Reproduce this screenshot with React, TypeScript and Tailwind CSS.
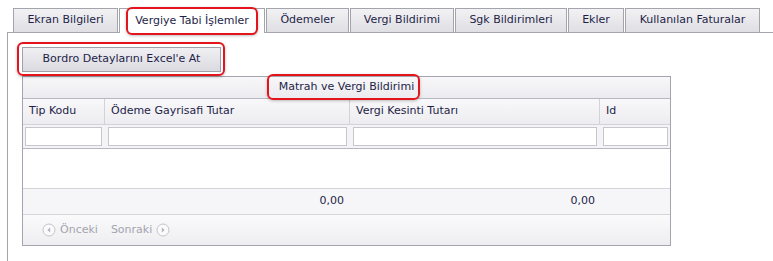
import React from 'react';

const tabs = [
  { label: 'Ekran Bilgileri', w: 'w-[105px]' },
  { label: 'Vergiye Tabi İşlemler', w: 'w-[146px]', active: true },
  { label: 'Ödemeler', w: 'w-[83px]' },
  { label: 'Vergi Bildirimi', w: 'w-[104px]' },
  { label: 'Sgk Bildirimleri', w: 'w-[112px]' },
  { label: 'Ekler', w: 'w-[56px]' },
  { label: 'Kullanılan Faturalar', w: 'w-[135px]' },
];

// red annotation box drawn over an element
function Mark({ className }: { className: string }) {
  return (
    <span
      className={`pointer-events-none absolute rounded-[6px] border-2 border-[#e3141c] shadow-[0_1px_3px_rgba(0,0,0,0.25)] ${className}`}
    />
  );
}

function PagerIcon({ dir }: { dir: 'left' | 'right' }) {
  return (
    <svg width="14" height="14" viewBox="0 0 14 14" className="shrink-0">
      <circle cx="7" cy="7" r="6" fill="#fafafc" stroke="#c4c4cc" strokeWidth="1" />
      {dir === 'left' ? (
        <path d="M8.2 4.6 L5.4 7 L8.2 9.4 Z" fill="#b4b4bc" />
      ) : (
        <path d="M5.8 4.6 L8.6 7 L5.8 9.4 Z" fill="#b4b4bc" />
      )}
    </svg>
  );
}

function FilterInput({ w }: { w: string }) {
  return <div className={`h-[19px] border border-[#c6c6cc] bg-white ${w}`} />;
}

export default function App() {
  return (
    <div className="h-[261px] w-[773px] overflow-hidden bg-white font-['DejaVu_Sans',Verdana,sans-serif] text-[11px] text-[#1e1e48]">
      <div className="ml-[7px] pt-[8px]">
        {/* tab strip */}
        <div className="flex gap-[1px] border-b border-[#a4a4ac] pl-[6px]">
          {tabs.map(t => (
            <div
              key={t.label}
              className={
                t.active
                  ? `relative -mb-px flex h-[25px] items-center justify-center border border-b-0 border-[#a4a4ac] bg-white ${t.w}`
                  : `flex h-[24px] items-center justify-center border border-b-0 border-[#a4a4ac] bg-gradient-to-b from-[#f2f2f4] to-[#dfdfe4] ${t.w}`
              }
            >
              <span className="relative">
                {t.label}
                {t.active && <Mark className="-top-[6px] -bottom-[6px] -left-[9px] -right-[9px]" />}
              </span>
            </div>
          ))}
        </div>

        {/* tab panel */}
        <div className="h-[230px] border-l border-[#a4a4ac] pl-[14px] pt-[14px]">
          <div className="relative w-[199px]">
            <button className="flex h-[25px] w-[199px] items-center justify-center border border-[#a0a0a8] bg-gradient-to-b from-[#f0f0f3] to-[#dadae0] text-[#1e1e48]">
              Bordro Detaylarını Excel'e At
            </button>
            <Mark className="-top-[5px] -bottom-[4px] -left-[5px] -right-[4px]" />
          </div>

          {/* grid */}
          <div className="mt-[4px] w-[649px] border border-[#a4a4ae]">
            <div className="flex h-[22px] items-center justify-center border-b border-[#b8b8c0] bg-gradient-to-b from-[#f7f7f9] to-[#ececf0]">
              <span className="relative">
                Matrah ve Vergi Bildirimi
                <Mark className="-top-[5px] -bottom-[4px] -left-[12px] -right-[6px]" />
              </span>
            </div>

            <div className="flex h-[26px] border-b border-[#d2d2d8] bg-gradient-to-b from-[#f8f8fa] to-[#ededf1]">
              <div className="flex w-[82px] items-center border-r border-[#d2d2d8] pl-[6px]">Tip Kodu</div>
              <div className="flex w-[245px] items-center border-r border-[#d2d2d8] pl-[6px]">Ödeme Gayrisafi Tutar</div>
              <div className="flex w-[250px] items-center border-r border-[#d2d2d8] pl-[6px]">Vergi Kesinti Tutarı</div>
              <div className="flex flex-1 items-center pl-[6px]">Id</div>
            </div>

            <div className="flex h-[24px] items-center gap-[6px] border-b border-[#b8b8c0] bg-[#f4f4f6] px-[2px]">
              <FilterInput w="w-[77px]" />
              <FilterInput w="w-[240px]" />
              <FilterInput w="w-[245px]" />
              <FilterInput w="w-[65px]" />
            </div>

            <div className="h-[40px] border-b border-[#d4d4da] bg-white" />

            <div className="flex h-[26px] items-center border-b border-[#d4d4da] bg-[#f6f6f8]">
              <div className="w-[82px]" />
              <div className="w-[245px] pr-[6px] text-right">0,00</div>
              <div className="w-[250px] pr-[5px] text-right">0,00</div>
            </div>

            <div className="flex h-[30px] items-center gap-[4px] bg-gradient-to-b from-[#fafafb] to-[#eeeef2] pl-[19px] text-[#a4a4ae]">
              <PagerIcon dir="left" />
              <span>Önceki</span>
              <span className="ml-[9px]">Sonraki</span>
              <PagerIcon dir="right" />
            </div>
          </div>
        </div>
      </div>
    </div>
  );
}
